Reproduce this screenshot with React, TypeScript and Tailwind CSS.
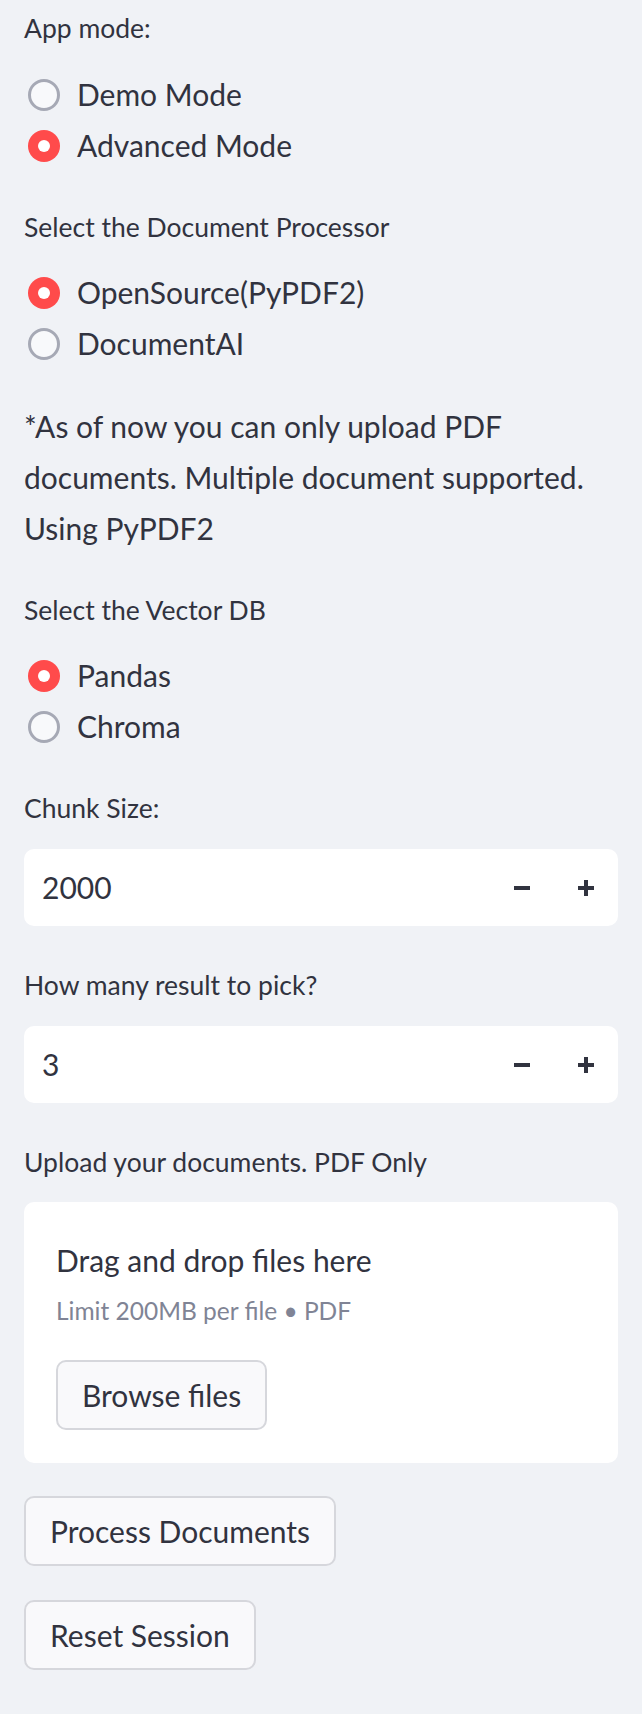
const font = { fontFamily: "Lato, 'Noto Sans', sans-serif" };

function Label({ text, className = "" }: { text: string; className?: string }) {
  return <div className={`h-[40px] text-[26.5px] leading-[40px] text-[#31333f] ${className}`}>{text}</div>;
}

function Radio({ label, checked }: { label: string; checked?: boolean }) {
  return (
    <div className="flex h-[51px] items-center">
      {checked ? (
        <span className="ml-[4px] flex h-[32px] w-[32px] items-center justify-center rounded-full bg-[#ff4b4b]">
          <span className="h-[12px] w-[12px] rounded-full bg-white" />
        </span>
      ) : (
        <span className="ml-[4px] h-[32px] w-[32px] rounded-full border-[3px] border-[#a6a9b5] bg-[#f8f9fb]" />
      )}
      <span className="ml-[17px] text-[30px] text-[#31333f]">{label}</span>
    </div>
  );
}

function NumberInput({ value, className = "" }: { value: string; className?: string }) {
  return (
    <div className={`flex h-[77px] items-center rounded-[10px] bg-white pl-[18px] ${className}`}>
      <span className="flex-1 text-[30px] text-[#31333f]">{value}</span>
      <div className="flex h-full w-[64px] items-center justify-center">
        <span className="h-[4px] w-[16px] bg-[#31333f]" />
      </div>
      <div className="flex h-full w-[64px] items-center justify-center">
        <svg width="16" height="16" viewBox="0 0 16 16">
          <rect x="0" y="6" width="16" height="4" fill="#31333f" />
          <rect x="6" y="0" width="4" height="16" fill="#31333f" />
        </svg>
      </div>
    </div>
  );
}

function Button({ text, className = "" }: { text: string; className?: string }) {
  return (
    <button
      className={`flex h-[70px] items-center rounded-[10px] border-2 border-[#d6d7dc] bg-[#f9f9fb] px-[24px] text-[30px] text-[#31333f] ${className}`}
    >
      {text}
    </button>
  );
}

export default function App() {
  return (
    <div className="min-h-[1714px] bg-[#f0f2f6] px-[24px] pt-[8px] pb-[40px]" style={font}>
      {/* App mode */}
      <Label text="App mode:" />
      <div className="mt-[21px]">
        <Radio label="Demo Mode" />
        <Radio label="Advanced Mode" checked />
      </div>

      {/* Document processor */}
      <Label text="Select the Document Processor" className="mt-[36px]" />
      <div className="mt-[20px]">
        <Radio label="OpenSource(PyPDF2)" checked />
        <Radio label="DocumentAI" />
      </div>

      <p className="mt-[32px] text-[30px] leading-[51px] text-[#31333f]">
        <span className="whitespace-nowrap">*As of now you can only upload PDF</span>
        <br />
        <span className="whitespace-nowrap">documents. Multiple document supported.</span>
        <br />
        Using PyPDF2
      </p>

      {/* Vector DB */}
      <Label text="Select the Vector DB" className="mt-[36px]" />
      <div className="mt-[20px]">
        <Radio label="Pandas" checked />
        <Radio label="Chroma" />
      </div>

      {/* Numbers */}
      <Label text="Chunk Size:" className="mt-[36px]" />
      <NumberInput value="2000" className="mt-[21px]" />

      <Label text="How many result to pick?" className="mt-[39px]" />
      <NumberInput value="3" className="mt-[21px]" />

      {/* Upload */}
      <Label text="Upload your documents. PDF Only" className="mt-[39px]" />
      <div className="mt-[20px] h-[261px] rounded-[10px] bg-white px-[32px] pt-[38px]">
        <div className="h-[40px] text-[30px] leading-[40px] text-[#31333f]">Drag and drop files here</div>
        <div className="mt-[13px] h-[36px] text-[24.5px] leading-[36px] text-[#808495]">Limit 200MB per file • PDF</div>
        <Button text="Browse files" className="mt-[31px]" />
      </div>

      <Button text="Process Documents" className="mt-[33px]" />
      <Button text="Reset Session" className="mt-[34px]" />
    </div>
  );
}
